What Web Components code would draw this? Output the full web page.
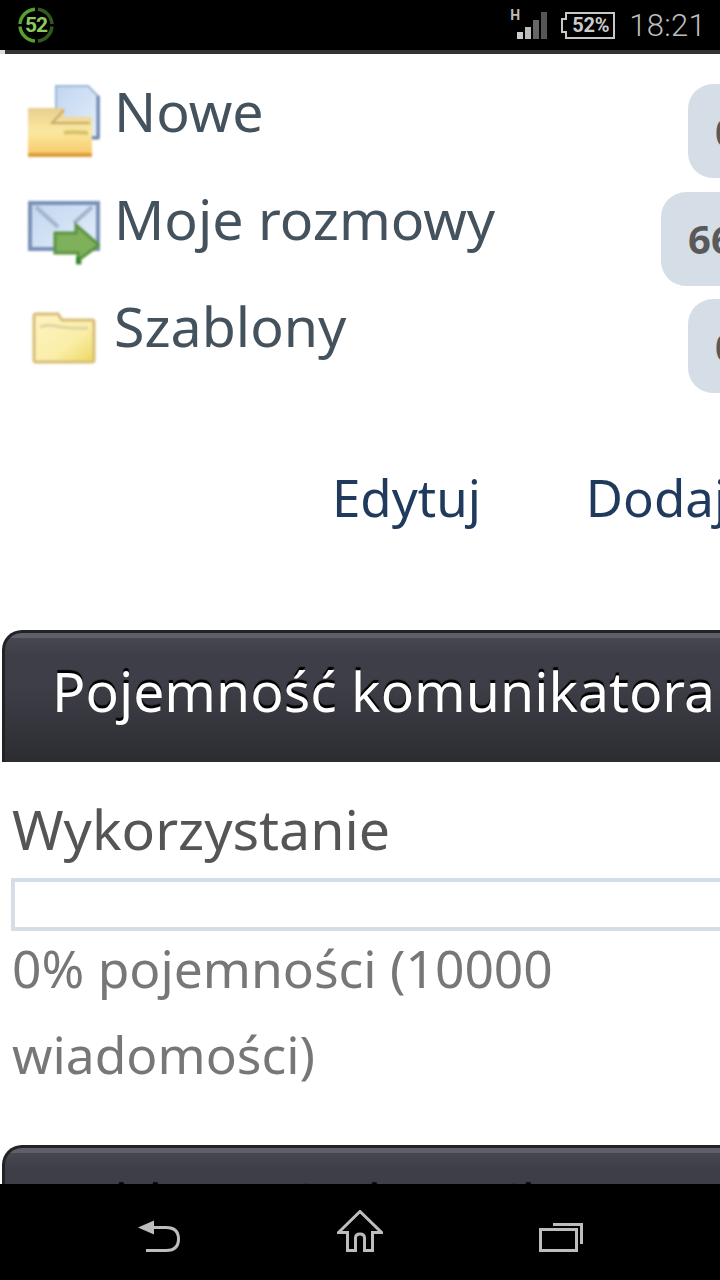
<!DOCTYPE html>
<html>
<head>
<meta charset="utf-8">
<style>
  html, body { margin: 0; padding: 0; background: #fff; }
  body { width: 720px; height: 1280px; overflow: hidden; display: flex; flex-direction: column; font-family: "Noto Sans", sans-serif; }
  .page { flex: 1; min-height: 0; overflow: hidden; }
</style>
</head>
<body>
<status-bar></status-bar>
<div class="page">
  <folder-list>
    <folder-row count="0" icon="new">Nowe</folder-row>
    <folder-row count="66" icon="mail">Moje rozmowy</folder-row>
    <folder-row count="0" icon="folder">Szablony</folder-row>
  </folder-list>
  <link-bar>
    <span>Edytuj</span>
    <span>Dodaj</span>
  </link-bar>
  <panel-head>Pojemność komunikatora</panel-head>
  <usage-box percent="0">0% pojemności (10000 wiadomości)</usage-box>
  <panel-head>Foldery użytkownika</panel-head>
</div>
<nav-bar></nav-bar>

<script>
class StatusBar extends HTMLElement {
  constructor() {
    super();
    this.attachShadow({ mode: 'open' });
  }
  connectedCallback() {
    this.shadowRoot.innerHTML = `
      <style>
        :host { display: flex; align-items: center; justify-content: space-between; height: 54px; box-sizing: border-box; flex: none;
          background: #000; border-bottom: 4px solid #333; border-image: linear-gradient(90deg, #ddd 6px, #333 6px) 1;
          padding: 0 14px 0 18px; color: #bbb; font-family: Roboto, sans-serif; }
        .left { display: flex; }
        .right { display: flex; align-items: center; }
        .ring { position: relative; width: 36px; height: 36px; display: flex; align-items: center; justify-content: center;
          color: #8ccb5e; font-size: 21px; font-weight: 700; letter-spacing: -1px; }
        .ring svg { position: absolute; inset: 0; }
        .signal { position: relative; width: 38px; height: 32px; }
        .signal span { position: absolute; left: 0; top: -1px; font-size: 14px; line-height: 14px; font-weight: 700; color: #bbb; }
        .signal svg { display: block; }
        .batt { position: relative; width: 54px; height: 27px; margin: 0 14px 0 13px; display: flex; align-items: center; justify-content: center;
          font-size: 20px; font-weight: 700; color: #ccc; padding-left: 5px; box-sizing: border-box; letter-spacing: -.3px; }
        .batt svg { position: absolute; inset: 0; }
        .time { font-size: 31px; font-weight: 300; color: #bdbdbd; letter-spacing: .3px; line-height: 1; }
      </style>
      <div class="left">
        <div class="ring">
          <svg width="36" height="36" viewBox="0 0 36 36" fill="none" stroke-width="3.4">
            <path d="M17 2.2A16 16 0 0 0 2 17M2 19.5A16 16 0 0 0 17 34" stroke="#56a02c"/>
            <path d="M20 2.2A16 16 0 0 1 34 17M34 19.5A16 16 0 0 1 20 34" stroke="#2f5c1b"/>
          </svg>
          52
        </div>
      </div>
      <div class="right">
        <div class="signal">
          <span>H</span>
          <svg width="38" height="32" viewBox="0 0 38 32">
            <rect x="7" y="23" width="6" height="7" fill="#ccc"/>
            <rect x="15" y="18" width="6" height="12" fill="#bbb"/>
            <rect x="23" y="11" width="6" height="19" fill="#666"/>
            <rect x="31" y="3" width="6" height="27" fill="#555"/>
          </svg>
        </div>
        <div class="batt">
          <svg width="54" height="27" viewBox="0 0 54 27" fill="none" stroke="#c8c8c8" stroke-width="2">
            <path d="M5 1H53V26H5V20H1V7H5Z"/>
          </svg>
          52%
        </div>
        <div class="time">18:21</div>
      </div>
    `;
  }
}
customElements.define('status-bar', StatusBar);

class FolderList extends HTMLElement {
  constructor() {
    super();
    this.attachShadow({ mode: 'open' });
    this.shadowRoot.innerHTML = `
      <style>
        :host { display: flex; flex-direction: column; gap: 13.5px; padding-top: 30px; }
      </style>
      <slot></slot>
    `;
  }
}
customElements.define('folder-list', FolderList);

const ICONS = {
  new: `
    <path d="M28 1H60L71 12V52H28Z" fill="url(#pg)" stroke="#9db6d8" stroke-width="2"/>
    <path d="M70 11V53H56" fill="none" stroke="#6f86ac" stroke-width="3"/>
    <path d="M0 23H36V32H64V71H0Z" fill="url(#fg)"/>
    <path d="M36 25L24 38H62" stroke="#c8a868" stroke-width="2" fill="none"/>
    <path d="M0 70H64" stroke="#dd9c3c" stroke-width="4"/>
    <path d="M36 48C44 46 54 48 60 48" stroke="#d9c06a" stroke-width="4" fill="none"/>`,
  mail: `
    <rect x="2" y="10" width="68" height="46" fill="url(#pg)" stroke="#7a90b8" stroke-width="4"/>
    <path d="M8 14L30 34M64 14L46 30" fill="none" stroke="#a4b4cc" stroke-width="4"/>
    <path d="M27 40H48V32L71 52 52 66V70H50V60H27Z" fill="#7fb05c" stroke="#5b9440" stroke-width="3"/>
    <path d="M50 64V71" stroke="#2f8a30" stroke-width="4"/>`,
  folder: `
    <path d="M6 18V16Q6 14 8 14H30L34 20H64Q66 20 66 22V60Q66 62 64 62H8Q6 62 6 60Z" fill="url(#yg)" stroke="#d8bd78" stroke-width="3"/>
    <path d="M12 27C22 22 32 30 60 28" stroke="#e0d5a0" stroke-width="3" fill="none"/>`
};

class FolderRow extends HTMLElement {
  constructor() {
    super();
    this.attachShadow({ mode: 'open' });
  }
  connectedCallback() {
    const count = this.getAttribute('count');
    const icon = this.getAttribute('icon');
    // the badge runs off the right edge of the page, only its start is visible
    const badgeWidth = count.length > 1 ? 59 : 32;
    this.shadowRoot.innerHTML = `
      <style>
        :host { display: flex; align-items: flex-start; height: 94px; padding-left: 28px; }
        svg { flex: none; width: 72px; height: 72px; margin: 1px 14px 0 0; filter: blur(1px); }
        .label { flex: 1; font-size: 55.5px; line-height: 54px; color: #44525e; white-space: nowrap; }
        .badge { flex: none; box-sizing: border-box; width: ${badgeWidth}px; height: 94px; border-radius: 25px 0 0 25px;
          background: #d5dee6; color: #595959; font-size: 40px; font-weight: 700; padding-left: 27px; display: flex; align-items: center; overflow: hidden; }
      </style>
      <svg viewBox="0 0 72 72">
        <defs>
          <linearGradient id="pg" x1="0" y1="0" x2="1" y2="1"><stop offset="0" stop-color="#c0d6f0"/><stop offset="1" stop-color="#e4eefa"/></linearGradient>
          <linearGradient id="fg" x1="0" y1="0" x2="0" y2="1"><stop offset="0" stop-color="#e8cf90"/><stop offset=".5" stop-color="#fbe9a0"/><stop offset="1" stop-color="#f7c765"/></linearGradient>
          <linearGradient id="yg" x1="0" y1="0" x2="1" y2="1"><stop offset="0" stop-color="#fdf3c0"/><stop offset=".6" stop-color="#fbeeaa"/><stop offset="1" stop-color="#ecd860"/></linearGradient>
        </defs>
        ${ICONS[icon]}
      </svg>
      <div class="label"><slot></slot></div>
      <div class="badge">${count}</div>
    `;
  }
}
customElements.define('folder-row', FolderRow);

class LinkBar extends HTMLElement {
  constructor() {
    super();
    this.attachShadow({ mode: 'open' });
    this.shadowRoot.innerHTML = `
      <style>
        :host { display: flex; gap: 105px; padding: 69px 0 0 332px; height: 237px; box-sizing: border-box;
          font-size: 51px; line-height: 70px; color: #1f3a5c; white-space: nowrap; overflow: hidden; }
      </style>
      <slot></slot>
    `;
  }
}
customElements.define('link-bar', LinkBar);

class PanelHead extends HTMLElement {
  constructor() {
    super();
    this.attachShadow({ mode: 'open' });
    this.shadowRoot.innerHTML = `
      <style>
        :host { display: block; box-sizing: border-box; height: 132px; width: 780px; margin-left: 2px; padding-left: 47px;
          border: 3px solid #212226; border-bottom: 0; border-radius: 20px 20px 0 0;
          background: linear-gradient(#5e5f68 0, #5e5f68 5px, #47474f 5px, #3e3e48 22px, #3e3e48 40%, #2c2d31 100%);
          color: #fff; font-size: 55.3px; line-height: 116px; white-space: nowrap; text-shadow: 0 -3px 1px #000; }
      </style>
      <slot></slot>
    `;
  }
}
customElements.define('panel-head', PanelHead);

class UsageBox extends HTMLElement {
  constructor() {
    super();
    this.attachShadow({ mode: 'open' });
  }
  connectedCallback() {
    const pct = this.getAttribute('percent') || 0;
    this.shadowRoot.innerHTML = `
      <style>
        :host { display: block; padding: 32px 0 0 11px; height: 383px; box-sizing: border-box; }
        h3 { margin: 0 0 0 1px; font-weight: 400; font-size: 55.5px; line-height: 70px; color: #555; }
        .bar { box-sizing: border-box; width: 780px; height: 53px; margin-top: 14px; border: 4px solid #d5dee6; background: #fff; }
        .fill { height: 100%; width: ${pct}%; background: #d5dee6; }
        p { margin: -6px 0 0 1px; width: 600px; font-size: 51.5px; line-height: 86px; color: #777; }
      </style>
      <h3>Wykorzystanie</h3>
      <div class="bar"><div class="fill"></div></div>
      <p><slot></slot></p>
    `;
  }
}
customElements.define('usage-box', UsageBox);

class NavBar extends HTMLElement {
  constructor() {
    super();
    this.attachShadow({ mode: 'open' });
    this.shadowRoot.innerHTML = `
      <style>
        :host { display: flex; flex: none; height: 96px; background: #000; justify-content: center; align-items: flex-end; gap: 156px; padding-bottom: 28px; box-sizing: border-box; }
        svg { display: block; fill: none; stroke: #bdbdbd; stroke-width: 3; }
      </style>
      <svg width="44" height="32" viewBox="0 0 44 32">
        <path d="M1 7.500L17 .5V14.500Z" fill="#bdbdbd" stroke="none"/>
        <path d="M16 7.500H29Q41.500 7.500 41.500 19T29 30.500H9"/>
      </svg>
      <svg width="46" height="42" viewBox="0 0 46 42">
        <path d="M1.500 22.500L23 1.500 44.500 22.500H35.500V40.500H27.500V28Q27.500 24 23 24T18.500 28V40.500H10.500V22.500Z"/>
      </svg>
      <svg width="44" height="30" viewBox="0 0 44 30">
        <path d="M1.500 7.500H37.500V28.500H1.500Z"/>
        <path d="M14 2.500H42.500V22"/>
      </svg>
    `;
  }
}
customElements.define('nav-bar', NavBar);
</script>
</body>
</html>
